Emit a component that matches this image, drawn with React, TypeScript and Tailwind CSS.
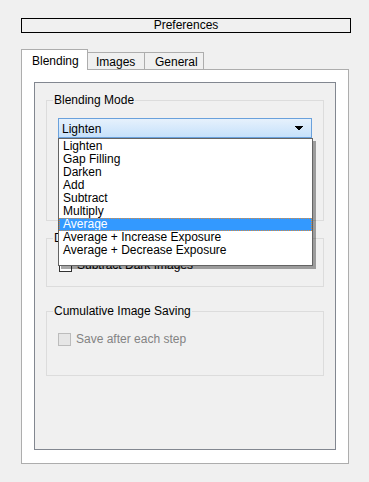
import React from "react";

const items = [
  "Lighten",
  "Gap Filling",
  "Darken",
  "Add",
  "Subtract",
  "Multiply",
  "Average",
  "Average + Increase Exposure",
  "Average + Decrease Exposure",
];

function Group({ title, className, children }: { title: string; className: string; children?: React.ReactNode }) {
  return (
    <div className={"relative ml-[11px] w-[278px] border border-[#dcdcdc] " + className}>
      <span className="absolute left-[6px] top-[-8px] bg-[#f0f0f0] px-[1px] leading-[14px] text-black">{title}</span>
      {children}
    </div>
  );
}

export default function App() {
  return (
    <div
      className="w-[369px] h-[482px] bg-[#f0f0f0] pt-[18px] pl-[21px] text-[12px] text-black"
      style={{ fontFamily: "Tahoma, 'Liberation Sans', Arial, sans-serif" }}
    >
      <div className="w-[330px] h-[15px] border border-black flex items-center justify-center leading-[13px]">
        Preferences
      </div>
      <div className="mt-[16px] flex items-end h-[21px] relative z-10">
        <div className="w-[67px] h-[21px] bg-white border border-[#adadad] border-b-0 pl-[10px] pt-[3px] leading-[16px]">
          Blending
        </div>
        <div className="w-[57px] h-[18px] bg-[#f0f0f0] border border-[#adadad] border-l-0 pl-[8px] pt-[1px] leading-[16px]">
          Images
        </div>
        <div className="w-[59px] h-[18px] bg-[#f0f0f0] border border-[#adadad] border-l-0 pl-[10px] pt-[1px] leading-[16px]">
          General
        </div>
      </div>
      <div className="-mt-px w-[328px] h-[395px] bg-white border border-[#adadad] pt-[12px] pl-[12px]">
        <div className="w-[302px] h-[368px] bg-[#f0f0f0] border border-[#828790] pt-[17px] relative">
          <Group title="Blending Mode" className="h-[121px] pt-[17px]">
            <div className="relative ml-[11px] w-[254px]">
              <div className="h-[20px] border border-[#6aa1dc] bg-gradient-to-b from-[#e6f1fc] to-[#c6e1fb] pl-[3px] pt-[2px] flex items-center leading-[14px]">
                <span>Lighten</span>
                <svg className="absolute right-[9px] top-[8px]" width="8" height="5" viewBox="0 0 8 5">
                  <path d="M0 0H8V1H7V2H6V3H5V4H3V3H2V2H1V1H0Z" fill="#000" />
                </svg>
              </div>
              <div className="absolute left-0 top-[20px] w-[255px] h-[128px] bg-white border border-[#646464] pt-[1px] shadow-[3px_3px_0_0_rgba(0,0,0,0.35)] z-20">
                {items.map((it) => (
                  <div
                    key={it}
                    className={
                      it === "Average"
                        ? "h-[13px] leading-[11px] pl-[3px] bg-[#3399ff] text-white border border-dotted border-[#d98a3c] overflow-hidden"
                        : "h-[13px] leading-[13px] pl-[4px] overflow-hidden"
                    }
                  >
                    {it}
                  </div>
                ))}
              </div>
            </div>
          </Group>
          <Group title="Dark Images" className="mt-[17px] h-[49px] pt-[20px]">
            <div className="flex items-center ml-[12px] gap-[5px]">
              <div className="w-[13px] h-[13px] border border-[#333] bg-white" />
              <span className="leading-[13px]">Subtract Dark Images</span>
            </div>
          </Group>
          <Group title="Cumulative Image Saving" className="mt-[24px] h-[65px] pt-[21px]">
            <div className="flex items-center ml-[11px] gap-[5px]">
              <div className="w-[13px] h-[13px] border border-[#bcbcbc] bg-[#e6e6e6]" />
              <span className="leading-[13px] text-[#838383]">Save after each step</span>
            </div>
          </Group>
        </div>
      </div>
    </div>
  );
}
